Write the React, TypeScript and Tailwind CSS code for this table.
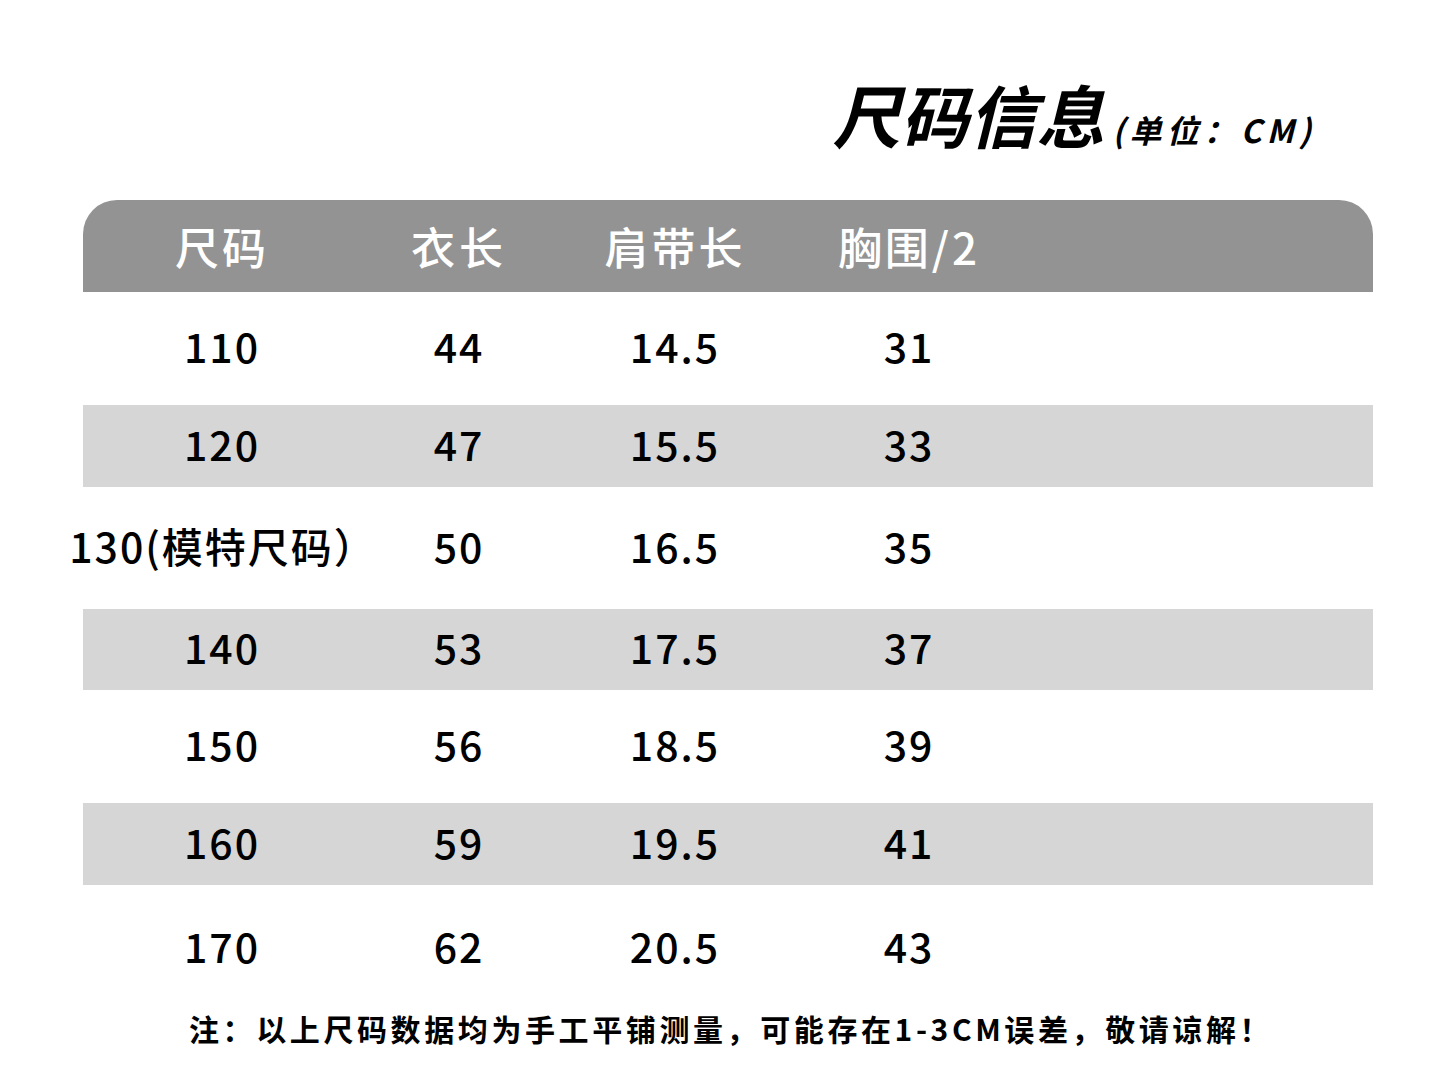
const cjk = "font-['Noto_Sans_CJK_SC','Noto_Sans',sans-serif]"

const rows = [
  { size: "110", len: "44", strap: "14.5", chest: "31", h: "h-[113px]", shade: false },
  { size: "120", len: "47", strap: "15.5", chest: "33", h: "h-[82px]", shade: true },
  { size: "130(模特尺码）", len: "50", strap: "16.5", chest: "35", h: "h-[122px]", shade: false },
  { size: "140", len: "53", strap: "17.5", chest: "37", h: "h-[81px]", shade: true },
  { size: "150", len: "56", strap: "18.5", chest: "39", h: "h-[113px]", shade: false },
  { size: "160", len: "59", strap: "19.5", chest: "41", h: "h-[82px]", shade: true },
  { size: "170", len: "62", strap: "20.5", chest: "43", h: "h-[126px]", shade: false },
]

const cols = "grid grid-cols-[278px_196px_236px_232px_1fr] items-center"

export default function App() {
  return (
    <div className={`w-[1440px] h-[1081px] bg-white text-black ${cjk}`}>
      {/* Title */}
      <div className="h-[200px] flex items-end justify-end pr-[124px] pb-[52px]">
        <div className="flex items-baseline italic font-bold">
          <span className="text-[68px] leading-none">尺码信息</span>
          <span className="text-[32px] leading-none ml-[8px] tracking-[5px]">(单位：CM)</span>
        </div>
      </div>

      {/* Table */}
      <div className="mx-[83px] w-[1290px]">
        <div className={`${cols} h-[92px] bg-[#939393] rounded-t-[34px] text-white text-[44px] font-medium leading-none`}>
          <div className="text-center tracking-[3px]">尺码</div>
          <div className="text-center tracking-[4px]">衣长</div>
          <div className="text-center tracking-[3px]">肩带长</div>
          <div className="text-center tracking-[3px]">胸围/2</div>
          <div />
        </div>

        {rows.map((r) => (
          <div
            key={r.size}
            className={`${cols} ${r.h} ${r.shade ? "bg-[#d6d6d6]" : "bg-white"} text-[41px] font-medium leading-none tracking-[2px] pb-[6px]`}
          >
            <div className={`flex justify-center whitespace-nowrap ${r.size.length > 3 ? "pl-[2px] tracking-[2px]" : ""}`}>
              <span>{r.size}</span>
            </div>
            <div className="text-center">{r.len}</div>
            <div className="text-center">{r.strap}</div>
            <div className="text-center">{r.chest}</div>
            <div />
          </div>
        ))}
      </div>

      {/* Note */}
      <div className="pl-[189px] pt-[2px] text-[30px] font-bold leading-none tracking-[3.6px] whitespace-nowrap">
        注：以上尺码数据均为手工平铺测量，可能存在1-3CM误差，敬请谅解！
      </div>
    </div>
  )
}
